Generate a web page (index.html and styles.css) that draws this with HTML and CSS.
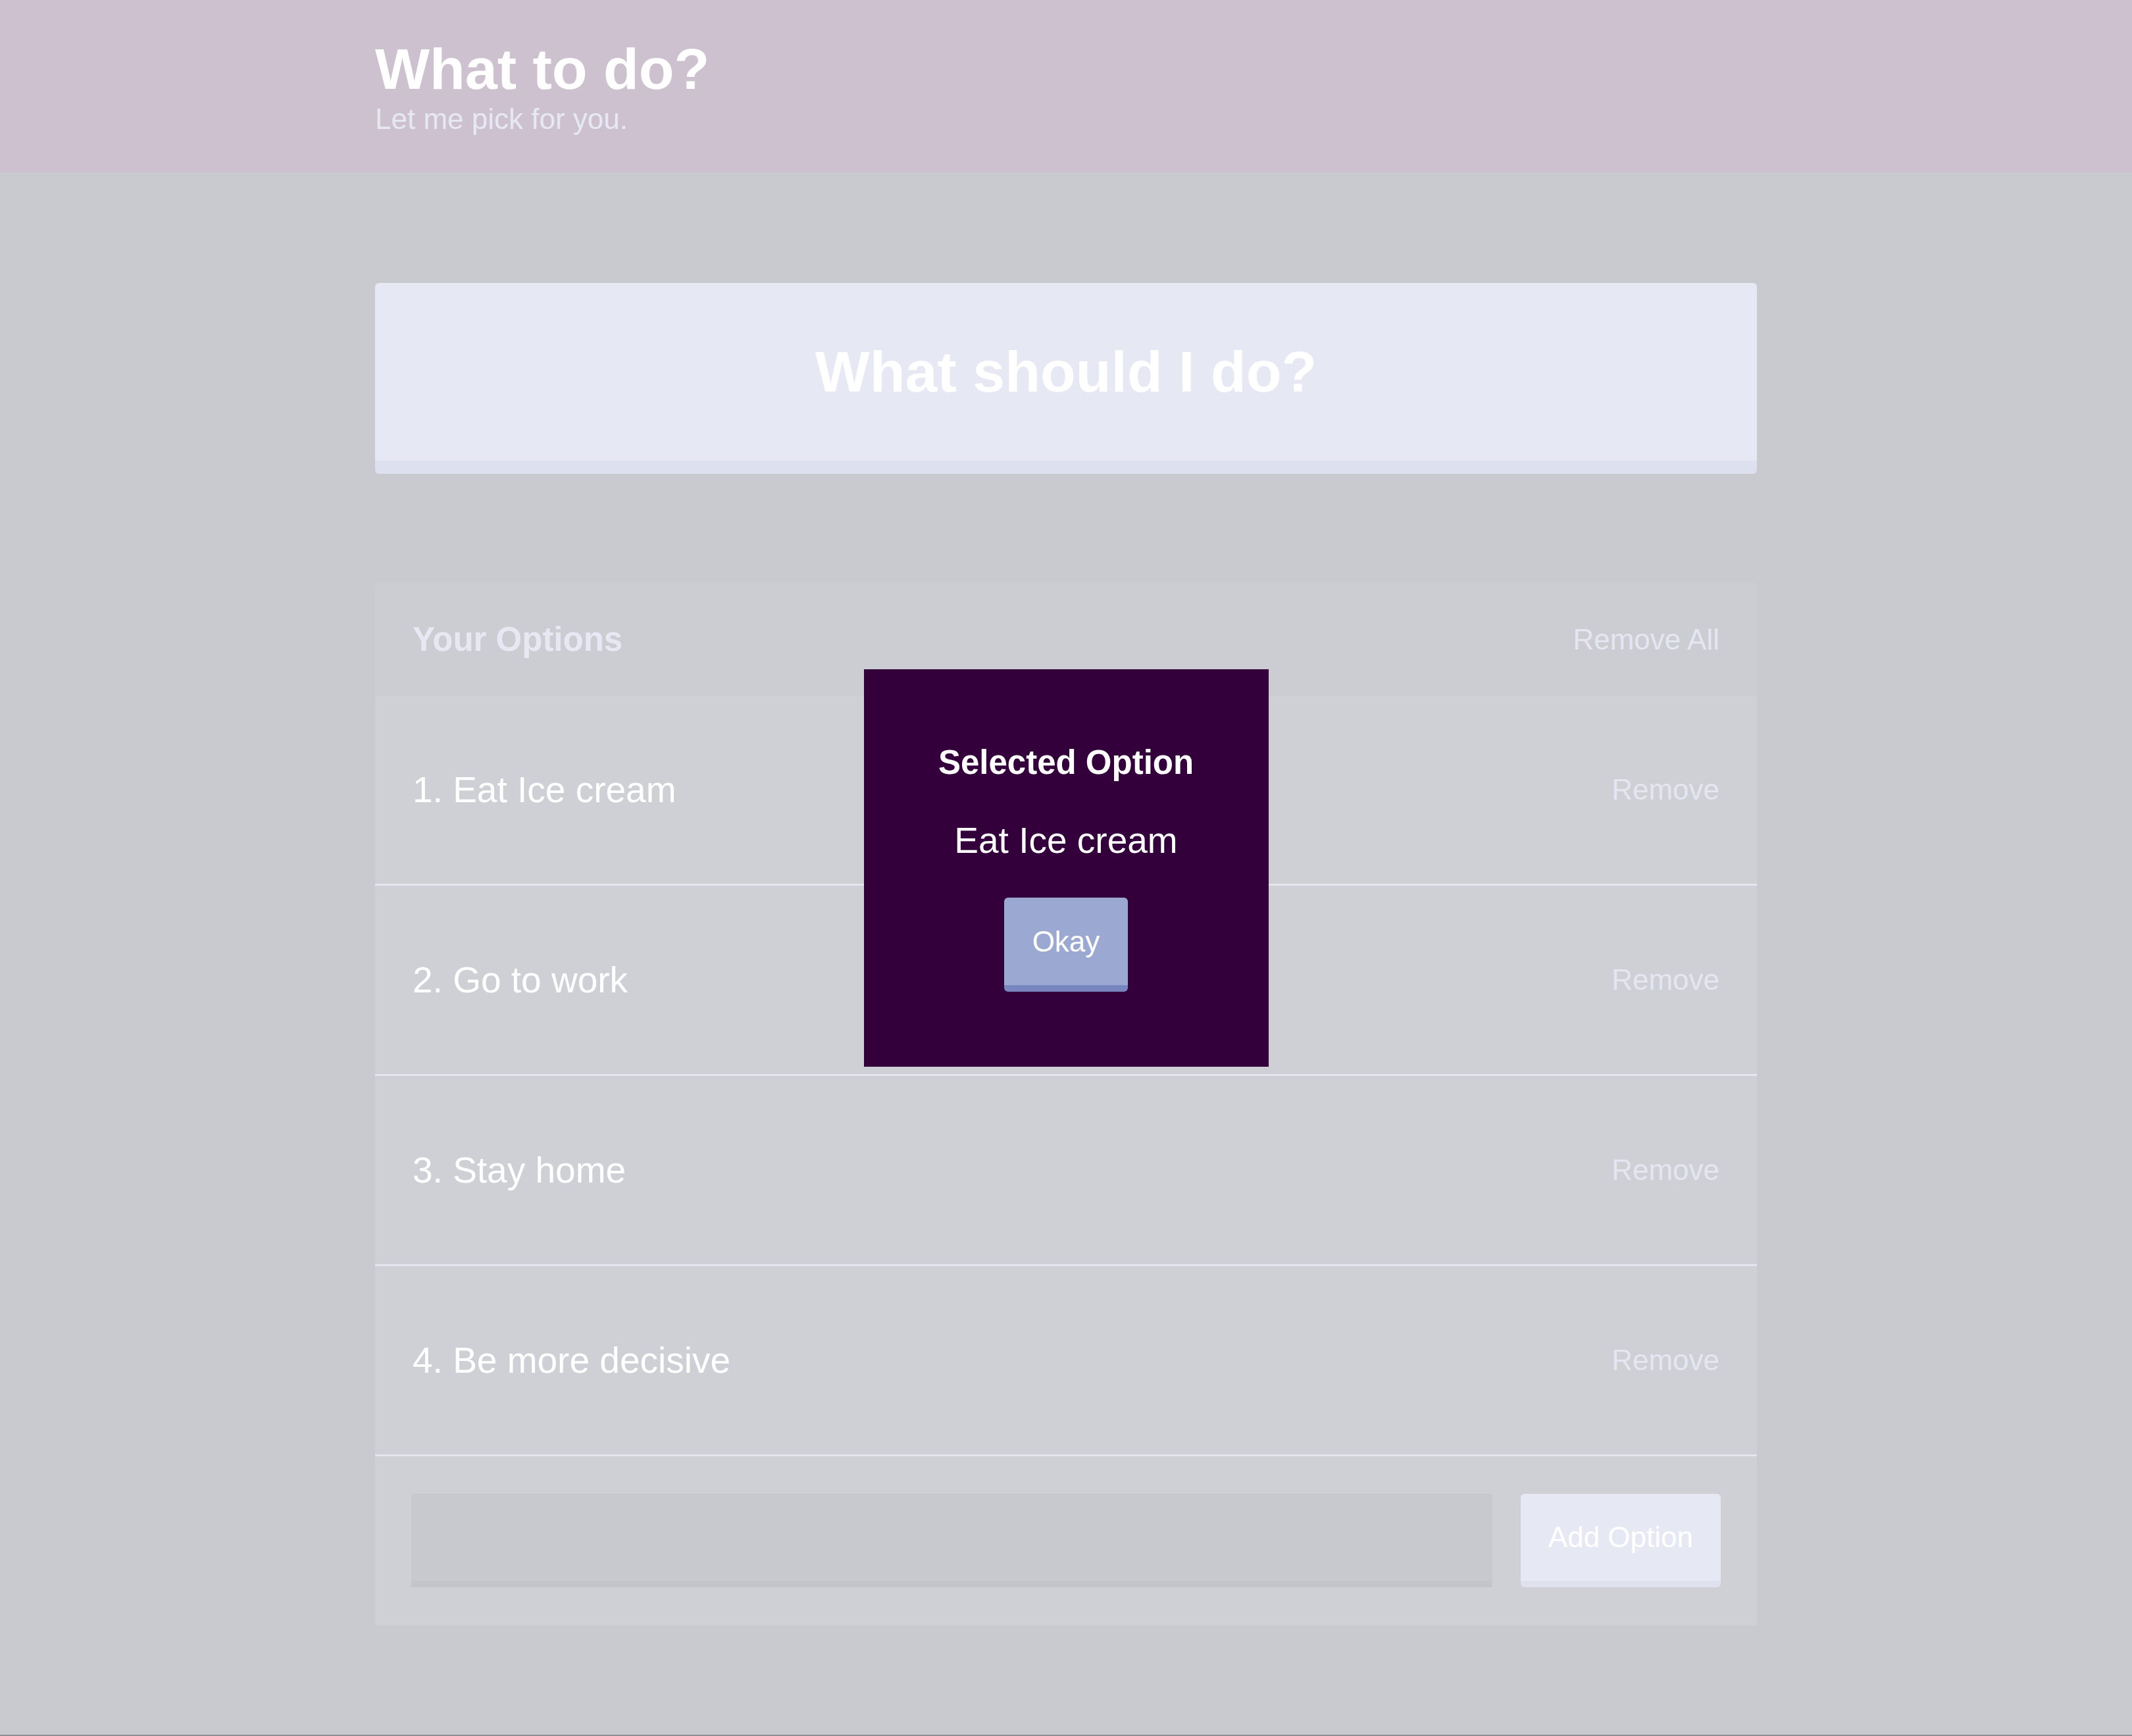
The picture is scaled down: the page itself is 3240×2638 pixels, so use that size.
FILE: index.html
```html
<!DOCTYPE html>
<html lang="en">
<head>
<meta charset="utf-8">
<title>Indecision</title>
<link rel="stylesheet" href="styles.css">
</head>
<body>
<header class="header">
  <div class="container">
    <h1 class="header__title">What to do?</h1>
    <h2 class="header__subtitle">Let me pick for you.</h2>
  </div>
</header>
<main class="container">
  <button class="big-button">What should I do?</button>
  <section class="widget">
    <div class="widget-header">
      <h3 class="widget-header__title">Your Options</h3>
      <button class="button--link">Remove All</button>
    </div>
    <div class="option">
      <p class="option__text">1. Eat Ice cream</p>
      <button class="button--link">Remove</button>
    </div>
    <div class="option">
      <p class="option__text">2. Go to work</p>
      <button class="button--link">Remove</button>
    </div>
    <div class="option">
      <p class="option__text">3. Stay home</p>
      <button class="button--link">Remove</button>
    </div>
    <div class="option">
      <p class="option__text">4. Be more decisive</p>
      <button class="button--link">Remove</button>
    </div>
    <form class="add-option">
      <input class="add-option__input" type="text" name="option">
      <button class="button" type="button">Add Option</button>
    </form>
  </section>
</main>
<div class="overlay">
  <div class="modal">
    <h3 class="modal__title">Selected Option</h3>
    <p class="modal__body">Eat Ice cream</p>
    <button class="button button--okay">Okay</button>
  </div>
</div>
<div class="bottom-edge"></div>
</body>
</html>
```

FILE: styles.css
```css
* {
  box-sizing: border-box;
}

html, body {
  margin: 0;
  padding: 0;
}

body {
  background: #c9cacf;
  font-family: "Liberation Sans", Arial, Helvetica, sans-serif;
  color: #ffffff;
  min-height: 2638px;
}

button, input {
  font-family: inherit;
}

.container {
  width: 2100px;
  margin: 0 auto;
}

.header {
  background: #cdc1cf;
  padding: 54px 0 56px;
  margin-bottom: 168px;
}

.header__title {
  margin: 0;
  font-size: 88px;
  font-weight: 700;
  color: #ffffff;
  line-height: normal;
}

.header__subtitle {
  margin: 0;
  font-size: 44px;
  font-weight: 400;
  color: #e6e8f3;
  line-height: normal;
}

.big-button {
  display: block;
  width: 100%;
  background: #e6e8f3;
  border: none;
  border-bottom: 20px solid #dde0ee;
  border-radius: 6px;
  color: #ffffff;
  font-size: 88px;
  font-weight: 700;
  padding: 84px 0 84px;
  margin: 0 0 166px;
  line-height: normal;
  text-align: center;
}

.widget {
  background: #cfd0d5;
  margin-bottom: 168px;
}

.widget-header {
  background: #cccdd2;
  display: flex;
  justify-content: space-between;
  align-items: center;
  padding: 56px 57px 56px;
}

.widget-header__title {
  margin: 0;
  font-size: 51px;
  font-weight: 700;
  color: #e6e8f3;
  line-height: normal;
}

.button--link {
  background: none;
  border: none;
  padding: 0;
  color: #e4e6f1;
  font-size: 44px;
  line-height: normal;
}

.option {
  display: flex;
  justify-content: space-between;
  align-items: center;
  padding: 111px 57px;
  border-bottom: 3px solid #e4e5ee;
}

.option__text {
  margin: 0;
  font-size: 55px;
  color: #ffffff;
  line-height: normal;
}

.add-option {
  display: flex;
  padding: 57px 55px 58px;
  margin: 0;
}

.add-option__input {
  flex-grow: 1;
  background: #c8c9ce;
  border: none;
  border-bottom: 10px solid #c4c5ca;
  margin: 0 43px 0 0;
  padding: 0 20px;
  font-size: 44px;
  outline: none;
}

.button {
  background: #e6e8f3;
  border: none;
  border-bottom: 10px solid #dfe1ee;
  border-radius: 6px;
  color: #ffffff;
  font-size: 44px;
  line-height: normal;
  padding: 41px 42px 41px;
}

.overlay {
  position: fixed;
  top: 0;
  left: 0;
  right: 0;
  bottom: 0;
  display: flex;
  align-items: center;
  justify-content: center;
}

.modal {
  width: 615px;
  background: #33003c;
  color: #ffffff;
  text-align: center;
  padding: 112px 40px 114px;
  display: flex;
  flex-direction: column;
  align-items: center;
}

.modal__title {
  margin: 0 0 57px;
  font-size: 51px;
  font-weight: 700;
  line-height: normal;
}

.modal__body {
  margin: 0 0 55px;
  font-size: 55px;
  line-height: normal;
}

.button--okay {
  background: #9ba8d2;
  border-bottom-color: #7886c0;
  padding: 41.5px 43px;
}

.bottom-edge {
  position: fixed;
  left: 0;
  right: 0;
  bottom: 0;
  height: 2px;
  background: #8e8f94;
}
```
